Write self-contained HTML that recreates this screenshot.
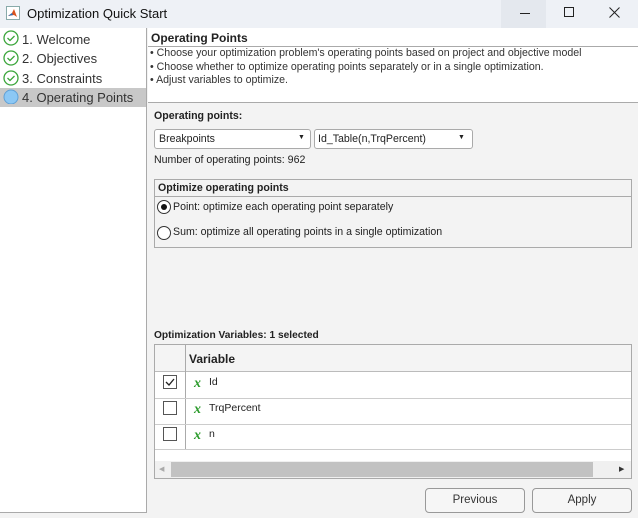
<!DOCTYPE html>
<html><head><style>
*{box-sizing:border-box;margin:0;padding:0}
body{width:638px;height:518px;background:#f3f3f3;font-family:"Liberation Sans",Arial,sans-serif;font-size:10.6px;color:#222;position:relative;overflow:hidden}
.a{position:absolute}
.t{white-space:nowrap}
</style></head><body>
<div class="a" style="left:0;top:0;width:638px;height:28px;background:#eef1f6"></div>
<svg class="a" style="left:6px;top:6px" width="14" height="14" viewBox="0 0 14 14"><rect x="0.5" y="0.5" width="13" height="13" fill="#fff" stroke="#8aa" /><path d="M2 10 L6 7 L8 3 L11 11 L8 9 Z" fill="#d9531e"/><path d="M2 10 L6 7 L7 9 Z" fill="#2a6fbd"/></svg>
<div class="a t" style="left:27px;top:6px;font-size:13px;color:#111">Optimization Quick Start</div>
<div class="a" style="left:501px;top:0;width:45px;height:28px;background:#e4e8ee"></div>
<div class="a" style="left:520px;top:13px;width:10px;height:1px;background:#222"></div>
<div class="a" style="left:564px;top:7px;width:10px;height:10px;border:1px solid #222"></div>
<svg class="a" style="left:609px;top:7px" width="11" height="11"><path d="M0.5 0.5L10.5 10.5M10.5 0.5L0.5 10.5" stroke="#222" stroke-width="1"/></svg>

<div class="a" style="left:0;top:28px;width:147px;height:485px;background:#fff;border-right:1px solid #aaa;border-bottom:1px solid #aaa"></div>
<div class="a" style="left:0;top:88px;width:146px;height:19px;background:#c8c8c8"></div>
<svg class="a" style="left:3px;top:30px" width="16" height="74">
<g fill="none" stroke="#3aa53a" stroke-width="1.3"><circle cx="8" cy="8" r="7"/><path d="M4.5 8l2.5 2.5 4.5-4.5"/>
<circle cx="8" cy="28" r="7"/><path d="M4.5 28l2.5 2.5 4.5-4.5"/>
<circle cx="8" cy="48" r="7"/><path d="M4.5 48l2.5 2.5 4.5-4.5"/></g>
<circle cx="8" cy="67" r="7" fill="#8cc8f5" stroke="#5fa0d6"/></svg>
<div class="a t" style="left:22px;top:32px;font-size:13px;color:#333">1. Welcome</div>
<div class="a t" style="left:22px;top:51px;font-size:13px;color:#333">2. Objectives</div>
<div class="a t" style="left:22px;top:71px;font-size:13px;color:#333">3. Constraints</div>
<div class="a t" style="left:22px;top:90px;font-size:13px;color:#333">4. Operating Points</div>

<div class="a" style="left:148px;top:28px;width:490px;height:75px;background:#fff;border-bottom:1px solid #aaa"></div>
<div class="a" style="left:148px;top:46px;width:490px;height:1px;background:#aaa"></div>
<div class="a t" style="left:151px;top:31px;font-size:12px;font-weight:bold">Operating Points</div>
<div class="a t" style="left:150px;top:47px;line-height:13.5px;color:#333">• Choose your optimization problem's operating points based on project and objective model<br>• Choose whether to optimize operating points separately or in a single optimization.<br>• Adjust variables to optimize.</div>

<div class="a t" style="left:154px;top:110px;font-weight:bold">Operating points:</div>
<div class="a" style="left:154px;top:129px;width:157px;height:20px;background:#fff;border:1px solid #aaa;border-radius:3px"></div>
<div class="a t" style="left:159px;top:133px">Breakpoints</div>
<div class="a" style="left:298px;top:134px;font-size:7px">▼</div>
<div class="a" style="left:314px;top:129px;width:159px;height:20px;background:#fff;border:1px solid #aaa;border-radius:3px"></div>
<div class="a t" style="left:318px;top:133px">Id_Table(n,TrqPercent)</div>
<div class="a" style="left:458px;top:134px;font-size:7px">▼</div>
<div class="a t" style="left:154px;top:154px">Number of operating points: 962</div>

<div class="a" style="left:154px;top:179px;width:478px;height:69px;border:1px solid #aaa"></div>
<div class="a" style="left:155px;top:196px;width:476px;height:1px;background:#aaa"></div>
<div class="a t" style="left:158px;top:182px;font-weight:bold">Optimize operating points</div>
<div class="a" style="left:157px;top:200px;width:14px;height:14px;border:1px solid #333;border-radius:50%;background:#fff"></div>
<div class="a" style="left:161px;top:204px;width:6px;height:6px;border-radius:50%;background:#111"></div>
<div class="a t" style="left:173px;top:201px">Point: optimize each operating point separately</div>
<div class="a" style="left:157px;top:226px;width:14px;height:14px;border:1px solid #333;border-radius:50%;background:#fff"></div>
<div class="a t" style="left:173px;top:226px">Sum: optimize all operating points in a single optimization</div>

<div class="a t" style="left:154px;top:330px;font-weight:bold;font-size:10.2px">Optimization Variables: 1 selected</div>
<div class="a" style="left:154px;top:344px;width:478px;height:135px;background:#fff;border:1px solid #aaa"></div>
<div class="a" style="left:155px;top:345px;width:476px;height:27px;background:#f4f4f4;border-bottom:1px solid #bbb"></div>
<div class="a" style="left:185px;top:345px;width:1px;height:105px;background:#aaa"></div>
<div class="a" style="left:155px;top:398px;width:476px;height:1px;background:#ccc"></div>
<div class="a" style="left:155px;top:424px;width:476px;height:1px;background:#ccc"></div>
<div class="a" style="left:155px;top:449px;width:476px;height:1px;background:#ccc"></div>
<div class="a t" style="left:189px;top:352px;font-weight:bold;font-size:12px">Variable</div>
<div class="a" style="left:163px;top:375px;width:14px;height:14px;border:1px solid #555;background:#fff"></div>
<svg class="a" style="left:164px;top:376px" width="12" height="12"><path d="M2 6l3 3 5-6" fill="none" stroke="#222" stroke-width="1.3"/></svg>
<div class="a" style="left:163px;top:401px;width:14px;height:14px;border:1px solid #555;background:#fff"></div>
<div class="a" style="left:163px;top:427px;width:14px;height:14px;border:1px solid #555;background:#fff"></div>
<div class="a t" style="left:194px;top:376px;color:#2a9a2a;font:italic bold 14px 'Liberation Serif',serif">x</div>
<div class="a t" style="left:194px;top:402px;color:#2a9a2a;font:italic bold 14px 'Liberation Serif',serif">x</div>
<div class="a t" style="left:194px;top:428px;color:#2a9a2a;font:italic bold 14px 'Liberation Serif',serif">x</div>
<div class="a t" style="left:209px;top:376px;font-size:10.5px">Id</div>
<div class="a t" style="left:209px;top:402px;font-size:10.5px">TrqPercent</div>
<div class="a t" style="left:209px;top:428px;font-size:10.5px">n</div>
<div class="a" style="left:155px;top:461px;width:476px;height:17px;background:#f0f0f0"></div>
<div class="a" style="left:171px;top:462px;width:422px;height:15px;background:#c2c2c2"></div>
<div class="a" style="left:159px;top:465px;font-size:7px;color:#aaa">◀</div>
<div class="a" style="left:619px;top:465px;font-size:7px;color:#333">▶</div>

<div class="a" style="left:425px;top:488px;width:100px;height:25px;border:1px solid #999;border-radius:4px;background:#f6f6f6;text-align:center;line-height:23px;font-size:11.5px;color:#333">Previous</div>
<div class="a" style="left:532px;top:488px;width:100px;height:25px;border:1px solid #999;border-radius:4px;background:#f6f6f6;text-align:center;line-height:23px;font-size:11.5px;color:#333">Apply</div>
</body></html>
